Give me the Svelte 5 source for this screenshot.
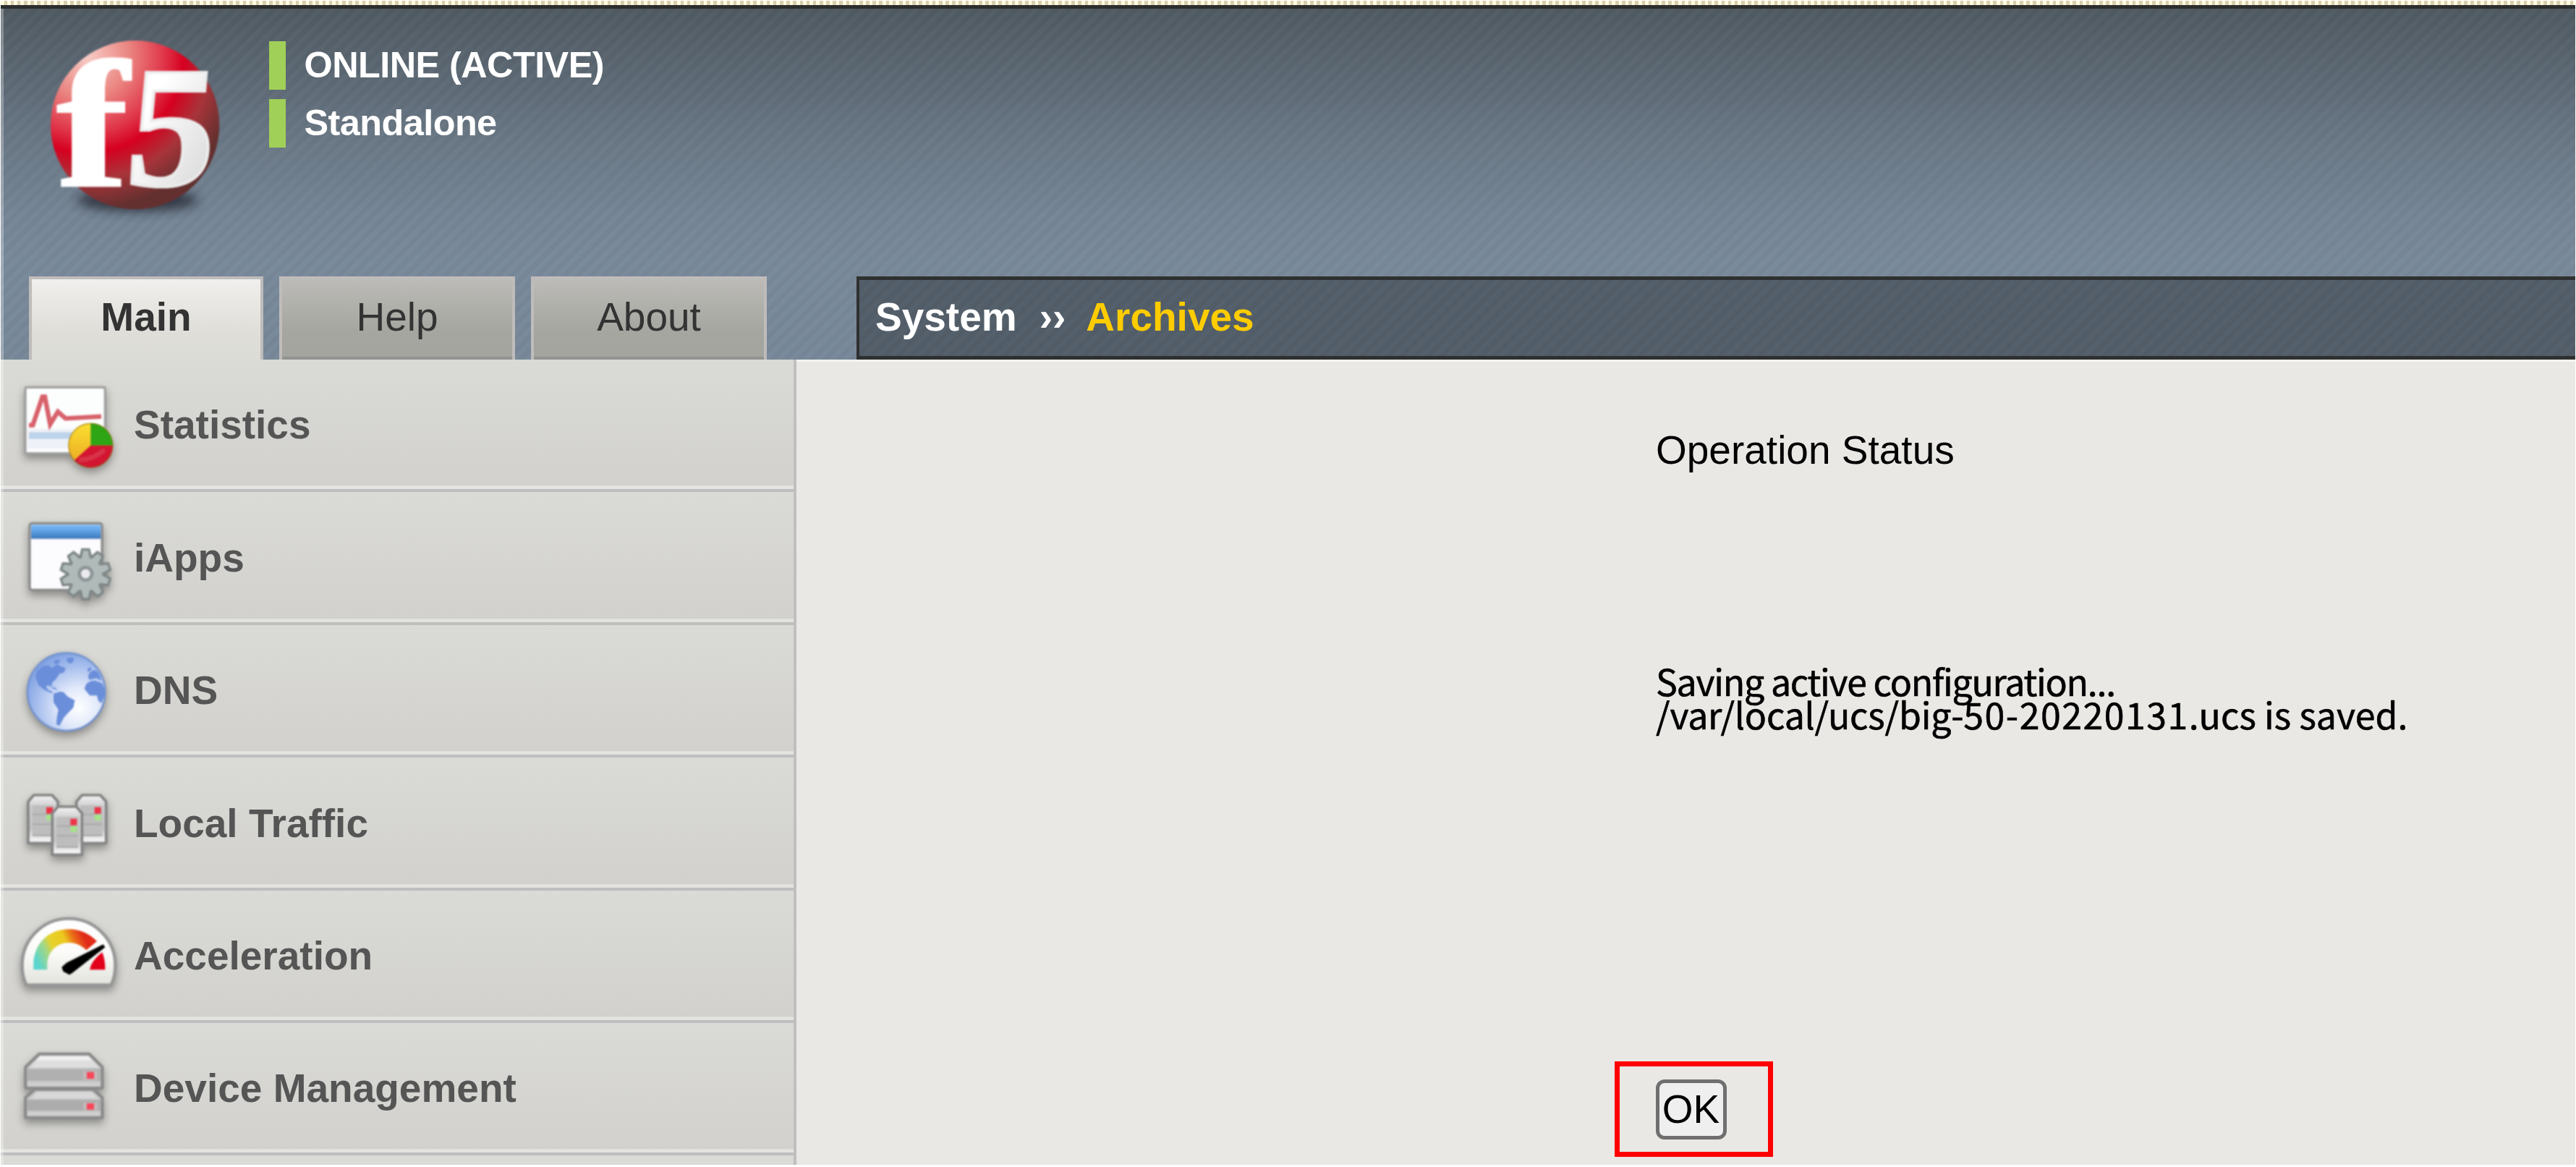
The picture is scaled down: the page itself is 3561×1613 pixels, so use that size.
<script>
  const tabs = ['Main', 'Help', 'About'];
  const items = [
    { label: 'Statistics', icon: 'stats', box: '3 22 552 550' },
    { label: 'iApps', icon: 'iapps', box: '3 572 552 550' },
    { label: 'DNS', icon: 'dns', box: '3 12 552 550' },
    { label: 'Local Traffic', icon: 'traffic', box: '3 562 552 550' },
    { label: 'Acceleration', icon: 'gauge', box: '3 3 552 550' },
    { label: 'Device Management', icon: 'devices', box: '3 553 552 550' }
  ];
  const teeth = [0, 36, 72, 108, 144, 180, 216, 252, 288, 324];
</script>

{#snippet tower(x, y)}
  <g transform="translate({x} {y})">
    <path d="M5 32 L28 5 H104 L128 32 V204 H5 Z" fill="url(#metal)" stroke="#858585" stroke-width="11" stroke-linejoin="round" />
    <path d="M22 48 H112 V176 H22 Z" fill="#bdbdbd" />
    <path d="M22 85 H96 M22 126 H112 M22 172 H112" stroke="#aaa" stroke-width="6" />
    <rect x="80" y="55" width="27" height="27" fill="#ee3347" />
    <rect x="80" y="86" width="27" height="23" fill="#a5e488" />
  </g>
{/snippet}

<div class="page">
  <div class="dots"></div>
  <header>
    <div class="brand">
      <svg class="logo" viewBox="0 0 840 840">
        <defs>
          <radialGradient id="ball" gradientUnits="userSpaceOnUse" cx="210" cy="110" r="640">
            <stop offset="0" stop-color="#f8cdc8" />
            <stop offset=".28" stop-color="#ea8480" />
            <stop offset=".5" stop-color="#e0364a" />
            <stop offset=".63" stop-color="#d6001f" />
            <stop offset=".8" stop-color="#a8343a" />
            <stop offset="1" stop-color="#63302f" />
          </radialGradient>
          <linearGradient id="five" x1="0" y1="0" x2="1" y2="1">
            <stop offset=".3" stop-color="#fff" />
            <stop offset=".9" stop-color="#d8d8d8" />
          </linearGradient>
          <filter id="soft" x="-30%" y="-100%" width="160%" height="300%"><feGaussianBlur stdDeviation="22" /></filter>
        </defs>
        <ellipse cx="420" cy="710" rx="250" ry="46" fill="#252c34" opacity=".85" filter="url(#soft)" />
        <circle cx="410" cy="398" r="350" fill="url(#ball)" />
        <text class="glyph" transform="translate(84 650) scale(1.2 1)" font-size="750" fill="#fff" stroke="#fff" stroke-width="9">f</text>
        <text class="glyph" transform="translate(362 648) skewX(-5) scale(1.02 1)" font-size="715" fill="url(#five)" stroke="#ececec" stroke-width="12">5</text>
      </svg>
      <div class="status">
        <div class="state">ONLINE (ACTIVE)</div>
        <div class="state">Standalone</div>
      </div>
    </div>
    <div class="bar">
      <nav class="tabs">
        {#each tabs as tab, i}
          <div class="tab" class:active={i === 0}>{tab}</div>
        {/each}
      </nav>
      <div class="crumbs"><span>System</span><span class="sep">››</span><span class="current">Archives</span></div>
    </div>
  </header>

  <div class="body">
    <aside>
      {#each items as item}
        <div class="item">
          <svg class="icon" viewBox={item.box}>
            {#if item.icon === 'stats'}
              <defs>
                <linearGradient id="metal" x1="0" y1="0" x2="0" y2="1">
                  <stop offset="0" stop-color="#f4f4f4" /><stop offset=".25" stop-color="#ccc" />
                  <stop offset=".7" stop-color="#c4c4c4" /><stop offset="1" stop-color="#fff" />
                </linearGradient>
                <linearGradient id="gold" x1="0" y1="0" x2="0" y2="1">
                  <stop offset="0" stop-color="#fbe032" /><stop offset="1" stop-color="#eaa420" />
                </linearGradient>
              </defs>
              <rect x="105" y="137" width="331" height="274" rx="6" fill="#fcfdfd" stroke="#a0a0a0" stroke-width="10" />
              <path d="M115 350 H430" stroke="#eef1f7" stroke-width="82" />
              <path d="M120 337 H420" stroke="#bcd3e9" stroke-width="27" />
              <path d="M120 294 H136 L176 176 H186 L208 290 L240 238 L272 266 L420 258" fill="none" stroke="#d8626b" stroke-width="19" />
              <circle cx="376" cy="378" r="93" fill="url(#gold)" />
              <path d="M376 378 V286 A92 92 0 0 1 468 378 Z" fill="#2ea514" />
              <path d="M376 378 H468 A92 92 0 0 1 308 440 Z" fill="#d41531" />
              <path d="M328 438 Q380 440 434 396" fill="none" stroke="#dc5262" stroke-width="20" opacity=".5" />
              <circle cx="376" cy="378" r="91" fill="none" stroke="#7d5a18" stroke-width="5" opacity=".45" />
            {:else if item.icon === 'iapps'}
              <defs>
                <linearGradient id="title" x1="0" y1="0" x2="0" y2="1">
                  <stop offset="0" stop-color="#7dbcf6" /><stop offset=".4" stop-color="#62a4e8" /><stop offset="1" stop-color="#3a77b8" />
                </linearGradient>
              </defs>
              <rect x="123" y="699" width="300" height="276" rx="10" fill="#fcfbfe" stroke="#8b8b8b" stroke-width="10" />
              <rect x="129" y="705" width="289" height="58" fill="url(#title)" />
              <g fill="#afbab9" stroke="#7f8787" stroke-width="12">
                {#each teeth as a}
                  <path transform="rotate({a} 355 910)" d="M333 842 L342 808 H368 L377 842 Z" />
                {/each}
                <circle cx="355" cy="910" r="73" />
              </g>
              <circle cx="355" cy="910" r="69" fill="#afbab9" />
              <g fill="#afbab9">
                {#each teeth as a}
                  <path transform="rotate({a} 355 910)" d="M338 846 L345 812 H365 L372 846 Z" />
                {/each}
              </g>
              <circle cx="355" cy="908" r="26" fill="#eceaf0" stroke="#8e9696" stroke-width="14" />
            {:else if item.icon === 'dns'}
              <defs>
                <radialGradient id="sea" cx=".66" cy=".7" r=".75">
                  <stop offset="0" stop-color="#fff" /><stop offset=".35" stop-color="#e0e8fa" />
                  <stop offset=".7" stop-color="#a9c0ee" /><stop offset="1" stop-color="#7d9fe2" />
                </radialGradient>
              </defs>
              <circle cx="275" cy="289" r="161" fill="url(#sea)" stroke="#7594cf" stroke-width="8" />
              <g fill="#6a8ed9">
                <path d="M146 226 L154 202 L180 180 L205 180 L214 190 L238 174 L250 182 L272 190 L266 208 L246 214 L232 236 L216 250 L214 266 L198 262 L190 266 L198 280 L220 290 L214 294 L186 282 L160 262 Z" />
                <path d="M210 266 L230 272 L240 282 L222 276 Z" />
                <path d="M222 296 L248 288 L264 290 L280 308 L310 324 L304 354 L284 374 L266 394 L246 430 L234 424 L236 394 L242 362 L222 332 Z" />
                <path d="M276 150 L304 146 L306 160 L294 172 L278 164 Z" />
                <path d="M226 158 L250 156 L244 170 L224 174 Z" />
                <path d="M366 218 L378 204 L390 198 L404 204 L414 220 L420 242 L400 232 L382 236 L368 238 Z" />
                <path d="M350 276 L358 256 L376 244 L396 242 L424 254 L434 280 L432 308 L420 336 L408 326 L402 304 L372 304 Z" />
                <path d="M362 196 L374 186 L380 194 L368 208 Z" />
              </g>
            {:else if item.icon === 'traffic'}
              {@render tower(112, 710)}
              {@render tower(312, 710)}
              {@render tower(212, 758)}
            {:else if item.icon === 'gauge'}
              <defs>
                <linearGradient id="dial" x1="0" y1="0" x2="0" y2="1">
                  <stop offset="0" stop-color="#fff" /><stop offset=".5" stop-color="#fbfbf9" /><stop offset="1" stop-color="#e3e3dd" />
                </linearGradient>
                <linearGradient id="heat" gradientUnits="userSpaceOnUse" x1="140" y1="330" x2="420" y2="200">
                  <stop offset=".08" stop-color="#5ad6cf" /><stop offset=".27" stop-color="#a9d780" /><stop offset=".36" stop-color="#e6d22c" />
                  <stop offset=".55" stop-color="#ecc81e" /><stop offset=".67" stop-color="#ea6a18" /><stop offset=".8" stop-color="#e12a18" />
                </linearGradient>
              </defs>
              <path d="M110 394 Q92 362 92 312 A193 193 0 0 1 478 312 Q478 362 460 394 Z" fill="url(#dial)" stroke="#979797" stroke-width="13" stroke-linejoin="round" />
              <path d="M139 331 V310 C139 225 200 163 285 163 C335 163 374 184 402 213 L358 250 C338 230 315 219 287 219 C234 219 196 258 196 312 V331 Z" fill="url(#heat)" />
              <path d="M372 331 Q376 296 424 258 Q437 292 436 331 Z" fill="#e2001a" />
              <path d="M428 226 L436 238 L300 344 L288 352 L262 338 L256 320 L276 302 Z" fill="#000" />
            {:else}
              <g stroke="#8a8a8a" stroke-width="12" stroke-linejoin="round">
                <path d="M106 735 L162 681 H370 L424 735 V822 H106 Z" fill="#c6c6c6" />
                <path d="M106 862 L145 828 H386 L424 862 V945 H106 Z" fill="#c6c6c6" />
              </g>
              <path d="M122 738 L166 690 H366 L412 738 Z" fill="#dedede" />
              <path d="M166 690 H366 L384 708 H150 Z" fill="#efefef" />
              <path d="M126 866 L156 838 H378 L408 866 Z" fill="#d8d8d8" />
              <rect x="114" y="744" width="302" height="48" fill="#b0b0b0" />
              <rect x="114" y="872" width="302" height="44" fill="#acacac" />
              <path d="M114 808 H416 M114 930 H416" stroke="#cfcfcf" stroke-width="16" />
              <path d="M345 752 H405 V790 H345 Z M345 882 H405 V914 H345 Z" fill="#c3b8b8" />
              <rect x="360" y="756" width="30" height="28" fill="#f7455a" />
              <rect x="360" y="886" width="30" height="26" fill="#f7455a" />
            {/if}
          </svg>
          <span>{item.label}</span>
        </div>
      {/each}
      <div class="item rest"></div>
    </aside>
    <main>
      <h1>Operation Status</h1>
      <div class="output">
        <div class="line first">Saving active configuration...</div>
        <div class="line"><span class="path">/var/local/ucs/big-</span><span class="digits">50-20220131</span>.ucs is saved.</div>
      </div>
      <div class="highlight"><button>OK</button></div>
    </main>
  </div>
</div>

<style>
  :global(body) { margin: 0; background: #fff; overflow: hidden; }
  .page {
    box-sizing: border-box;
    width: 3561px;
    height: 1613px;
    padding: 1px 1px 3px;
    display: flex;
    flex-direction: column;
    font-family: 'Liberation Sans', Arial, sans-serif;
    font-size: 55px;
    position: relative;
  }
  .page::before {
    content: '';
    position: absolute;
    left: 1px;
    top: 12px;
    bottom: 3px;
    width: 4px;
    background: rgba(255, 255, 255, .3);
    z-index: 1;
  }
  .dots {
    height: 6px;
    flex: none;
    background: repeating-linear-gradient(90deg, #fdfae0 0 4.58px, #d9cfae 4.58px 9.166px);
  }
  header {
    height: 490.3px;
    flex: none;
    box-sizing: border-box;
    border-top: 5px solid #2c2d2d;
    display: flex;
    flex-direction: column;
    background:
      repeating-linear-gradient(135deg, rgba(255, 255, 255, .022) 0 3px, rgba(0, 0, 0, .012) 7px 10px, rgba(255, 255, 255, .022) 12.96px),
      linear-gradient(#4f5961 0, #5a6671 85px, #697785 185px, #748494 285px, #778899 350px, #768798 100%);
  }
  .brand { height: 370.3px; display: flex; }
  .logo { width: 280px; height: 280px; margin: 28px 0 0 49px; overflow: visible; filter: blur(1px); }
  .glyph { font-family: 'Liberation Serif', serif; font-weight: 700; }
  .status { margin: 45px 0 0 42px; display: flex; flex-direction: column; gap: 13.3px; }
  .state {
    border-left: 23px solid #a0d057;
    padding-left: 25.5px;
    font-size: 50.4px;
    line-height: 66.7px;
    letter-spacing: -.55px;
    font-weight: 700;
    color: #fff;
    white-space: nowrap;
  }
  .bar { display: flex; height: 115px; }
  .tabs { display: flex; gap: 22px; margin-left: 39px; width: 1144px; flex: none; }
  .tab {
    box-sizing: border-box;
    width: 326px;
    height: 115px;
    border: solid #bfbcbb;
    border-width: 4px 4px 0;
    line-height: 104.5px;
    text-align: center;
    color: #333;
    background: linear-gradient(#bcbbb7, #a5a6a0 65%, #a4a59f 106px, #929290 108px);
  }
  .tab.active {
    width: 324px;
    font-weight: 700;
    background: linear-gradient(#f0efed, #dfded9 65%, #dcdcd7);
  }
  .crumbs {
    flex: 1;
    box-sizing: border-box;
    border: 5px solid #2f3030;
    border-width: 5px 0 5px 4px;
    background: repeating-linear-gradient(135deg, #54606b 0 3px, #515c67 7px 10px, #54606b 12.96px);
    color: #fff;
    font-weight: 700;
    line-height: 103px;
    padding-left: 22px;
    display: flex;
    white-space: nowrap;
  }
  .sep { margin: 0 28px 0 31px; }
  .current { color: #fc0; }
  .body { flex: 1; min-height: 0; display: flex; }
  aside {
    width: 1100px;
    flex: none;
    box-sizing: border-box;
    border-right: 4px solid #bfbfbf;
    overflow: hidden;
    display: flex;
    flex-direction: column;
    background: #dadad6;
  }
  .item {
    height: 183.42px;
    flex: none;
    display: flex;
    line-height: 181px;
    font-weight: 700;
    color: #555;
    background: linear-gradient(#dadad6 0, #d2d1cd 173.8px, #e4e4e0 174.8px 178.4px, #bebebe 179.4px 182.8px, #dadad6 183.4px);
  }
  .rest { background: #dadad6; }
  .icon {
    width: 184px;
    height: 183.4px;
    flex: none;
    filter: blur(.9px) drop-shadow(0 6px 6px rgba(0, 0, 0, .35));
  }
  main {
    flex: 1;
    background: #e9e8e4;
    border-top: 3px solid #f3f2ef;
    padding: 90px 0 0 1131px;
    color: #000;
  }
  h1 { margin: 0 0 263.6px 57px; font-size: 55px; line-height: 64px; font-weight: 400; }
  .output {
    margin-left: 57px;
    height: 91.4px;
    font: 50px/45.7px 'Noto Sans CJK JP', 'Noto Sans', sans-serif;
    -webkit-text-stroke: .6px #000;
    white-space: nowrap;
  }
  .line { height: 45.7px; }
  .first { letter-spacing: -1.25px; }
  .path { letter-spacing: -.2px; }
  .digits { letter-spacing: 1.5px; }
  .highlight {
    box-sizing: border-box;
    width: 219px;
    height: 131.4px;
    margin-top: 458px;
    border: 7px solid #f00;
    padding: 17.4px 0 0 49.5px;
  }
  button {
    display: block;
    box-sizing: border-box;
    width: 98px;
    height: 83px;
    padding: 0;
    border: 5px solid #6f6f6f;
    border-radius: 12px;
    background: #efefef;
    font: 55px/73px 'Liberation Sans', Arial, sans-serif;
    color: #000;
  }
</style>
